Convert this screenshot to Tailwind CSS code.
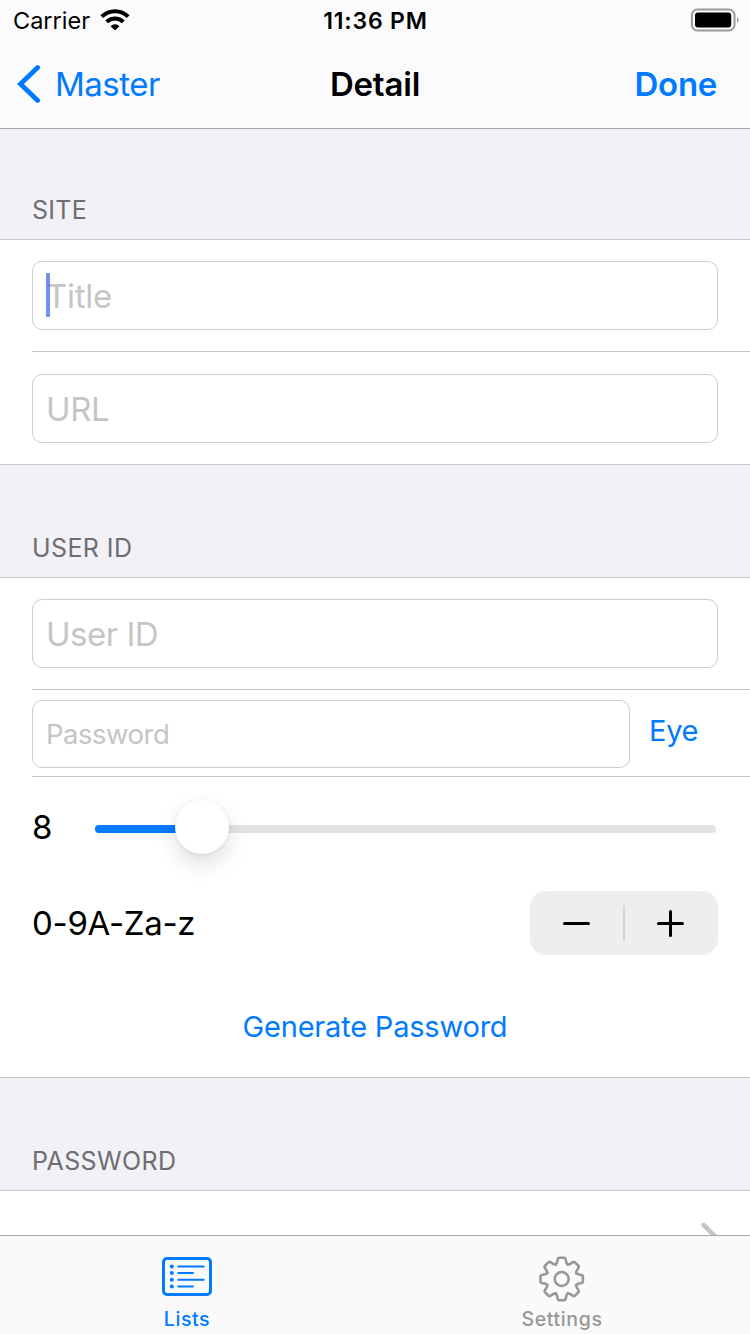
<!DOCTYPE html>
<html lang="en">
<head>
<meta charset="utf-8">
<title>Detail</title>
<script src="https://cdn.jsdelivr.net/npm/@tailwindcss/browser@4"></script>
</head>
<body class="w-[750px] h-[1334px] overflow-hidden bg-[#f2f1f6] font-['Inter',sans-serif] text-black whitespace-nowrap flex flex-col">
<header class="h-[129px] shrink-0 bg-[#fbfbfd] border-b border-[#a9a9ad] flex flex-col">
  <div class="h-10 grid grid-cols-3 items-center text-[23.5px]">
    <div class="flex items-center pl-[13px] gap-[10px] h-[41px]">
      <span class="w-[77px]">Carrier</span>
      <svg class="w-[30px] h-[22px] mb-px" viewBox="0 0 30 22"><g fill="none" stroke="#000" stroke-width="4"><path d="M1.8 7.7A18.6 18.6 0 0 1 28.2 7.7"/><path d="M6.7 12.9A11.8 11.8 0 0 1 23.3 12.9"/></g><path d="M15 21.5L10.6 17.2A6.2 6.2 0 0 1 19.4 17.2Z"/></svg>
    </div>
    <div class="h-[41px] flex items-center justify-center pt-px pl-px font-semibold text-[23px] tracking-[0.8px]"><span>11:36 PM</span></div>
    <svg class="justify-self-end mr-[10px] mb-[2px] w-[50px] h-[24px]" viewBox="0 0 50 24"><rect x="1.9" y="1.5" width="42.6" height="21" rx="5.5" fill="none" stroke="#9b9b9d" stroke-width="2"/><rect x="5" y="4.5" width="36.2" height="15" rx="3" /><path d="M47 8.5Q50 12 47 15.5Z" fill="#9b9b9d"/></svg>
  </div>
  <div class="h-[88px] grid grid-cols-3 items-center text-[33px]">
    <div class="flex items-center pl-[17px] text-[#007aff]">
      <svg class="w-[25px] h-[40px]" viewBox="0 0 25 40"><path d="M20.7 3.6L3.4 20L20.7 36.4" fill="none" stroke="currentColor" stroke-width="4.8" stroke-linecap="round" stroke-linejoin="miter"/></svg>
      <span class="ml-[13px] pt-[2px] tracking-[-0.5px]">Master</span>
    </div>
    <div class="text-center pt-[2px] font-semibold tracking-[-0.2px]">Detail</div>
    <div class="text-right pt-[2px] pr-[33px] font-semibold tracking-[-0.3px] text-[#007aff]">Done</div>
  </div>
</header>
<main class="h-[1106px] shrink-0 overflow-hidden flex flex-col text-[33px]">
  <h2 class="h-[111px] shrink-0 border-b border-[#c6c6c8] pl-8 pt-[61px] text-[25px] leading-10 tracking-[0.3px] text-[#6d6d72]">SITE</h2>
  <section class="h-[225px] shrink-0 bg-white border-b border-[#c6c6c8] pl-8">
    <div class="h-[112px] border-b border-[#c6c6c8] pt-[21px] pr-8">
      <div class="relative h-[69px] rounded-[10px] border border-[#cdcdcd] pl-[13px] flex items-center text-[#c5c5c5]">
        <span class="pt-[2px] tracking-[-0.3px]">Title</span><i class="absolute left-[13px] top-[11px] w-1 h-11 rounded-[1px] bg-[#426bf2]/75"></i>
      </div>
    </div>
    <div class="pt-[22px] pr-8">
      <div class="h-[69px] rounded-[10px] border border-[#cdcdcd] pl-[13px] flex items-center text-[#c5c5c5]"><span class="pt-[2px] tracking-[-0.4px]">URL</span></div>
    </div>
  </section>
  <h2 class="h-[113px] shrink-0 border-b border-[#c6c6c8] pl-8 pt-[63px] text-[25px] leading-10 tracking-[0.4px] text-[#6d6d72]"><span>USER ID</span></h2>
  <section class="h-[500px] shrink-0 bg-white border-b border-[#c6c6c8] pl-8">
    <div class="h-[112px] border-b border-[#c6c6c8] pt-[21px] pr-8">
      <div class="h-[69px] rounded-[10px] border border-[#cdcdcd] pl-[13px] flex items-center text-[#c5c5c5]"><span class="pt-[2px] tracking-[-0.5px]">User ID</span></div>
    </div>
    <div class="h-[87px] border-b border-[#c6c6c8] pt-[10px] flex items-start">
      <div class="w-[598px] h-[68px] rounded-[10px] border border-[#cdcdcd] pl-[13px] flex items-center text-[27.5px] text-[#c5c5c5]"><span class="pt-[2px] tracking-[-0.5px]">Password</span></div>
      <div class="h-[61px] ml-[19px] flex items-center text-[29px] tracking-[-0.3px] text-[#007aff]"><span>Eye</span></div>
    </div>
    <div class="h-[101px] pr-[34px] flex items-center">
      <span class="w-[63px]">8</span>
      <div class="relative mt-[3px] h-2 flex-1 rounded-full bg-[#e3e3e5]">
        <div class="h-2 w-[100px] rounded-full bg-[#007aff]"></div>
        <div class="absolute left-[80px] -top-[25px] size-[54px] rounded-full bg-white shadow-[0_10px_22px_rgba(0,0,0,0.13),0_1px_4px_rgba(0,0,0,0.07)]"></div>
      </div>
    </div>
    <div class="h-[90px] pr-8 flex items-center justify-between">
      <span class="pt-[2px] tracking-[-0.3px]">0-9A-Za-z</span>
      <div class="w-[188px] h-16 rounded-[16px] bg-[#eeeeee] flex items-center">
        <svg class="w-[93px] h-16" viewBox="0 0 93 64"><path d="M34.5 32.5H58.5" stroke="#000" stroke-width="3" stroke-linecap="round"/></svg>
        <i class="w-[2px] h-9 bg-[#d3d3d4] rounded-full"></i>
        <svg class="w-[93px] h-16" viewBox="0 0 93 64"><path d="M33.5 32.5H57.5M45.5 20.5V44.5" stroke="#000" stroke-width="3" stroke-linecap="round"/></svg>
      </div>
    </div>
    <div class="h-[118px] pr-8 flex items-center justify-center text-[29px] tracking-[-0.2px] text-[#007aff]"><span>Generate Password</span></div>
  </section>
  <h2 class="h-[113px] shrink-0 border-b border-[#c6c6c8] pl-8 pt-[63px] text-[25px] leading-10 tracking-[0.4px] text-[#6d6d72]"><span>PASSWORD</span></h2>
  <section class="h-[88px] shrink-0 bg-white flex justify-end items-start pr-[33px] pt-[30px]">
    <svg class="w-[17px] h-[28px]" viewBox="0 0 17 28"><path d="M3.7 3.9L13.6 14L3.7 24.1" fill="none" stroke="#c4c4c7" stroke-width="4.6" stroke-linecap="round"/></svg>
  </section>
</main>
<nav class="h-[99px] shrink-0 bg-[#fafafa] border-t border-[#a9a9ad] grid grid-cols-2 text-[19.5px] font-medium">
  <div class="flex flex-col items-center pt-[21px] pr-[2px] text-[#007aff]">
    <svg class="w-[50px] h-[39px]" viewBox="0 0 50 39"><rect x="1.5" y="1.5" width="47" height="36" rx="3.5" fill="none" stroke="currentColor" stroke-width="3"/><g fill="currentColor"><circle cx="9.8" cy="9.4" r="2"/><circle cx="9.8" cy="16" r="2"/><circle cx="9.8" cy="22.7" r="2"/><circle cx="9.8" cy="29.5" r="2"/></g><path d="M16.3 9.4H41.7M16.3 16H31M16.3 22.7H41.7M16.3 29.5H31" stroke="currentColor" stroke-width="2" stroke-linecap="round"/></svg>
    <span class="mt-[11px] pl-px leading-6 tracking-[0.6px]">Lists</span>
  </div>
  <div class="flex flex-col items-center pt-[20px] pr-[2px] text-[#979797]">
    <svg class="w-[46px] h-[46px]" viewBox="-22.7 -23 46 46" fill="none" stroke="currentColor" stroke-width="2.6" stroke-linecap="round" stroke-linejoin="round">
      <defs><path id="tooth" d="M-5.97 -14.41L-4.8 -16.2L-3.9 -20Q-3.6 -21.2 -2.4 -21.2H2.4Q3.6 -21.2 3.9 -20L4.8 -16.2L5.97 -14.41"/></defs>
      <use href="#tooth"/><use href="#tooth" transform="rotate(45)"/><use href="#tooth" transform="rotate(90)"/><use href="#tooth" transform="rotate(135)"/><use href="#tooth" transform="rotate(180)"/><use href="#tooth" transform="rotate(225)"/><use href="#tooth" transform="rotate(270)"/><use href="#tooth" transform="rotate(315)"/>
      <circle r="7" stroke-width="2.6"/>
    </svg>
    <span class="mt-[5px] pl-px leading-6 tracking-[0.65px]">Settings</span>
  </div>
</nav>
</body>
</html>
